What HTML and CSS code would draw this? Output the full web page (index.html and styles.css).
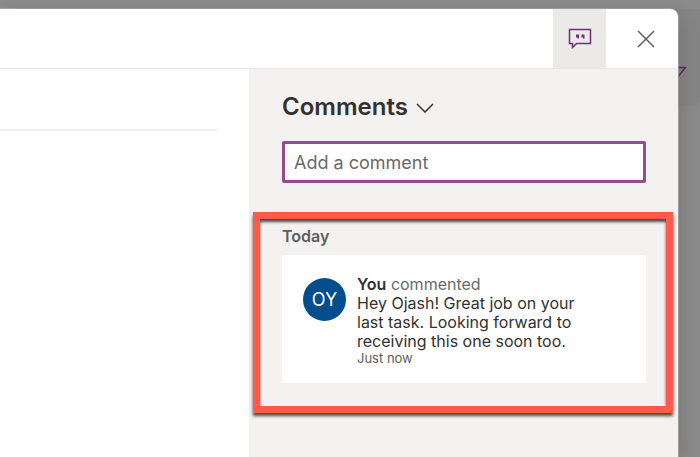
FILE: index.html
```html
<!DOCTYPE html>
<html lang="en">

<head>
    <meta charset="UTF-8">
    <meta name="viewport" content="width=device-width, initial-scale=1.0">
    <title>Comments</title>
    <link rel="stylesheet" href="styles.css">
</head>

<body>
    <div class="backdrop-bar">
        <svg class="send-icon" width="20" height="20" viewBox="0 0 20 20" aria-hidden="true">
            <path d="M2 5.500H17.500L8 17Z" />
        </svg>
    </div>

    <div class="dialog">
        <header class="dialog-header">
            <button type="button" class="header-button active" aria-label="Comments">
                <svg width="24" height="22" viewBox="0 0 24 22" aria-hidden="true">
                    <path class="bubble" d="M1.500 1.500H22.500V15.500H8.500L4.500 19.500V15.500H1.500Z" />
                    <path class="quotes" d="M8 6.500H11V10.500H9.500V9.500H8ZM13.500 6.500H16.500V10.500H15V9.500H13.500Z" />
                </svg>
            </button>
            <button type="button" class="header-button close" aria-label="Close">
                <svg width="18" height="18" viewBox="0 0 18 18" aria-hidden="true">
                    <path d="M1 1L17 17M17 1L1 17" />
                </svg>
            </button>
        </header>

        <div class="dialog-body">
            <main class="details">
                <hr>
            </main>

            <aside class="comments">
                <h2>
                    <button type="button" class="comments-toggle">
                        Comments
                        <svg width="18" height="12" viewBox="0 0 18 12" aria-hidden="true">
                            <path d="M1 3L9 11L17 3" />
                        </svg>
                    </button>
                </h2>
                <input type="text" class="comment-input" placeholder="Add a comment" aria-label="Add a comment">

                <section class="highlight">
                    <h3>Today</h3>
                    <article class="comment">
                        <div class="avatar">OY</div>
                        <div class="comment-text">
                            <p class="comment-author"><strong>You</strong> commented</p>
                            <p>Hey Ojash! Great job on your last task. Looking forward to receiving this one soon too.</p>
                            <p class="comment-time">Just now</p>
                        </div>
                    </article>
                </section>
            </aside>
        </div>
    </div>
</body>

</html>
```

FILE: styles.css
```css
* {
    box-sizing: border-box;
}

body {
    margin: 0;
    min-height: 100vh;
    display: flex;
    overflow: hidden;
    background-color: #8b8b8b;
    font-family: Inter, "Liberation Sans", sans-serif;
    color: #323130;
}

h2,
h3,
p {
    margin: 0;
}

button {
    padding: 0;
    border: none;
    background: none;
    font: inherit;
    color: inherit;
    cursor: pointer;
}

svg {
    fill: none;
}

/* page behind the dialog */
.backdrop-bar {
    position: absolute;
    top: 9px;
    right: 0;
    width: 60px;
    height: 97px;
    padding: 53px 0 0 28px;
    background-color: #868686;
    border-bottom-right-radius: 6px;
}

.send-icon path {
    stroke: #5c2d58;
    stroke-width: 1.5;
}

.dialog {
    position: relative;
    flex: 1;
    display: flex;
    flex-direction: column;
    margin: 9px 22px 0 0;
    background-color: #fff;
    border-top-right-radius: 8px;
    box-shadow: 0 0 1px 1px rgba(170, 170, 170, 0.7), 4px 6px 20px rgba(0, 0, 0, 0.15);
    overflow: hidden;
}

.dialog-header {
    display: flex;
    justify-content: flex-end;
    height: 60px;
    border-bottom: 1px solid #e6e5e4;
}

.header-button {
    display: flex;
    align-items: center;
    justify-content: center;
    width: 53px;
}

.header-button.active {
    background-color: #ebeae9;
}

.header-button.close {
    width: 72px;
    padding-left: 8px;
}

.bubble {
    stroke: #742f70;
    stroke-width: 1.5;
}

.quotes {
    fill: #742f70;
}

.close path {
    stroke: #605e5c;
    stroke-width: 1.5;
}

.dialog-body {
    flex: 1;
    display: flex;
}

.details {
    flex: 1;
    padding: 60px 32px 0 0;
}

.details hr {
    margin: 0;
    border: none;
    border-top: 2px solid #efefef;
}

.comments {
    width: 429px;
    padding: 24px 5px 0 4px;
    background-color: #f3f2f1;
}

.comments h2 {
    padding-left: 29px;
    font-size: 24px;
    font-weight: 600;
    line-height: 28px;
}

.comments-toggle {
    display: flex;
    align-items: center;
    gap: 8px;
}

.comments-toggle path {
    stroke: #323130;
    stroke-width: 1.5;
}

.comment-input {
    display: block;
    width: calc(100% - 56px);
    height: 42px;
    margin: 20px 27px 29px 29px;
    padding: 0 9px;
    border: 3px solid #964b8f;
    border-radius: 2px;
    background-color: #fff;
    font-family: inherit;
    font-size: 18px;
    color: #323130;
}

.comment-input::placeholder {
    color: #6b6967;
    opacity: 1;
}

.highlight {
    padding: 7px 20px 23px 22px;
    border: 7px solid #ff5a4b;
    box-shadow: 0 3px 3px rgba(0, 0, 0, 0.7), inset 0 3px 3px rgba(0, 0, 0, 0.7);
}

.highlight h3 {
    padding-bottom: 9px;
    font-size: 16px;
    font-weight: 600;
    line-height: 20px;
    color: #605e5c;
}

.comment {
    display: flex;
    gap: 11px;
    padding: 20px 60px 17px 21px;
    border-radius: 3px;
    background-color: #fff;
}

.avatar {
    flex: none;
    display: flex;
    align-items: center;
    justify-content: center;
    width: 43px;
    height: 43px;
    margin-top: 3px;
    border-radius: 50%;
    background-color: #004e8c;
    font-size: 18px;
    color: #fff;
}

.comment-text {
    font-size: 16px;
    line-height: 19px;
}

.comment-text strong {
    font-weight: 600;
}

.comment-author strong {
    color: #323130;
}

.comment-author {
    color: #6b6967;
}

.comment-time {
    font-size: 13px;
    line-height: 15px;
    color: #605e5c;
}
```
